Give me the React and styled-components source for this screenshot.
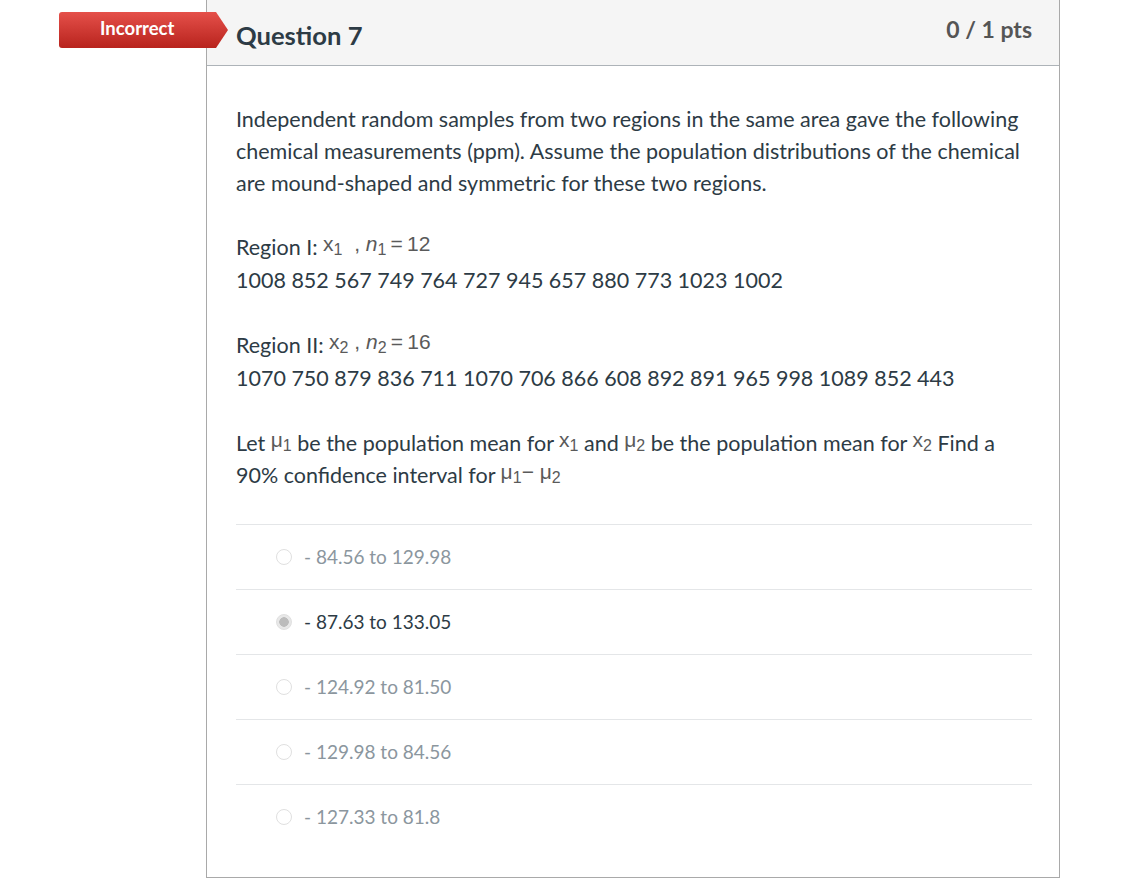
import React from 'react'
import styled, { createGlobalStyle } from 'styled-components';

const GlobalStyle = createGlobalStyle`
  body {
    margin: 0;
    background: #fff;
    font-family: Lato, "Open Sans", sans-serif;
  }
`;

const Page = styled.div`
  width: 1125px;
  height: 893px;
  padding-left: 206px;
  box-sizing: border-box;
  overflow: hidden;
`;

const Card = styled.div`
  position: relative;
  width: 854px;
  height: 878px;
  box-sizing: border-box;
  border: 1px solid #a9a9a9;
  border-top: none;
`;

const Badge = styled.div`
  position: absolute;
  left: -148px;
  top: 12px;
  width: 169px;
  height: 36px;
  display: flex;
  align-items: center;
  padding: 0 0 4px 41px;
  box-sizing: border-box;
  color: #fff;
  font-weight: 700;
  font-size: 18.5px;
  background: linear-gradient(#e5504a, #b8231d);
  clip-path: polygon(0 0, 157px 0, 169px 50%, 157px 100%, 0 100%);
  border-radius: 3px 0 0 3px;
`;

const Header = styled.div`
  height: 66px;
  box-sizing: border-box;
  background: #f5f5f5;
  border-bottom: 1px solid #adb3b8;
  display: flex;
  align-items: center;
  justify-content: space-between;
  padding: 0 27px 0 29px;
`;

const Title = styled.h2`
  margin: 4px 0 0;
  font-size: 25.6px;
  font-weight: 700;
  color: #2d3b45;
`;

const Points = styled.div`
  margin-top: -8px;
  font-size: 23px;
  font-weight: 700;
  color: #555;
`;

const Body = styled.div`
  padding: 37px 27px 0 29px;
  color: #2d3b45;
  font-size: 21.5px;
  line-height: 32px;
`;

const Para = styled.p`
  margin: 0 0 32px;
  line-height: ${p => p.$tall ? '33px' : '32px'};
`;

const Math = styled.span`
  font-family: "Liberation Sans", Arial, sans-serif;
  font-size: 21px;
  line-height: 0;
  color: #5a5a5a;
  position: relative;
  top: -4px;
  sub {
    font-size: 16px;
    line-height: 0;
    vertical-align: -4px;
  }
  i {
    font-style: italic;
  }
`;

const Answers = styled.div`
  margin-top: 33px;
`;

const Answer = styled.label`
  height: 64px;
  border-top: 1px solid #e4e6e8;
  display: flex;
  align-items: center;
  padding-left: 40px;
  font-size: 19px;
  color: ${p => (p.$selected ? '#2d3b45' : '#8b969e')};
`;

const Radio = styled.span`
  width: 16px;
  height: 16px;
  border-radius: 50%;
  box-sizing: border-box;
  border: 1px solid #e0e0e0;
  background: ${p => (p.$selected ? 'radial-gradient(circle, #bcbcbc 0 4.5px, #e8e8e8 5px)' : '#fff')};
  margin-right: 12px;
  flex-shrink: 0;
`;

const answers = [
  '- 84.56 to 129.98',
  '- 87.63 to 133.05',
  '- 124.92 to 81.50',
  '- 129.98 to 84.56',
  '- 127.33 to 81.8',
];

const mu = n => (
  <Math>μ<sub>{n}</sub></Math>
);

export default function App() {
  return (
    <>
      <GlobalStyle />
      <Page>
        <Card>
          <Badge>Incorrect</Badge>
          <Header>
            <Title>Question 7</Title>
            <Points>0 / 1 pts</Points>
          </Header>
          <Body>
            <Para>
              Independent random samples from two regions in the same area gave the following
              chemical measurements (ppm). Assume the population distributions of the chemical
              are mound-shaped and symmetric for these two regions.
            </Para>
            <Para $tall>
              Region I: <Math>x<sub>1</sub>&nbsp;&nbsp;, <i>n</i><sub>1</sub>&thinsp;=&thinsp;12</Math>
              <br />
              1008 852 567 749 764 727 945 657 880 773 1023 1002
            </Para>
            <Para $tall>
              Region II: <Math>x<sub>2</sub> , <i>n</i><sub>2</sub>&thinsp;=&thinsp;16</Math>
              <br />
              1070 750 879 836 711 1070 706 866 608 892 891 965 998 1089 852 443
            </Para>
            <Para>
              Let {mu(1)} be the population mean for <Math>x<sub>1</sub></Math> and {mu(2)} be
              the population mean for <Math>x<sub>2</sub></Math> Find a
              <br />
              90% confidence interval for <Math>μ<sub>1</sub>− μ<sub>2</sub></Math>
            </Para>
            <Answers>
              {answers.map((a, i) => (
                <Answer key={a} $selected={i === 1}>
                  <Radio $selected={i === 1} />
                  {a}
                </Answer>
              ))}
            </Answers>
          </Body>
        </Card>
      </Page>
    </>
  );
}
